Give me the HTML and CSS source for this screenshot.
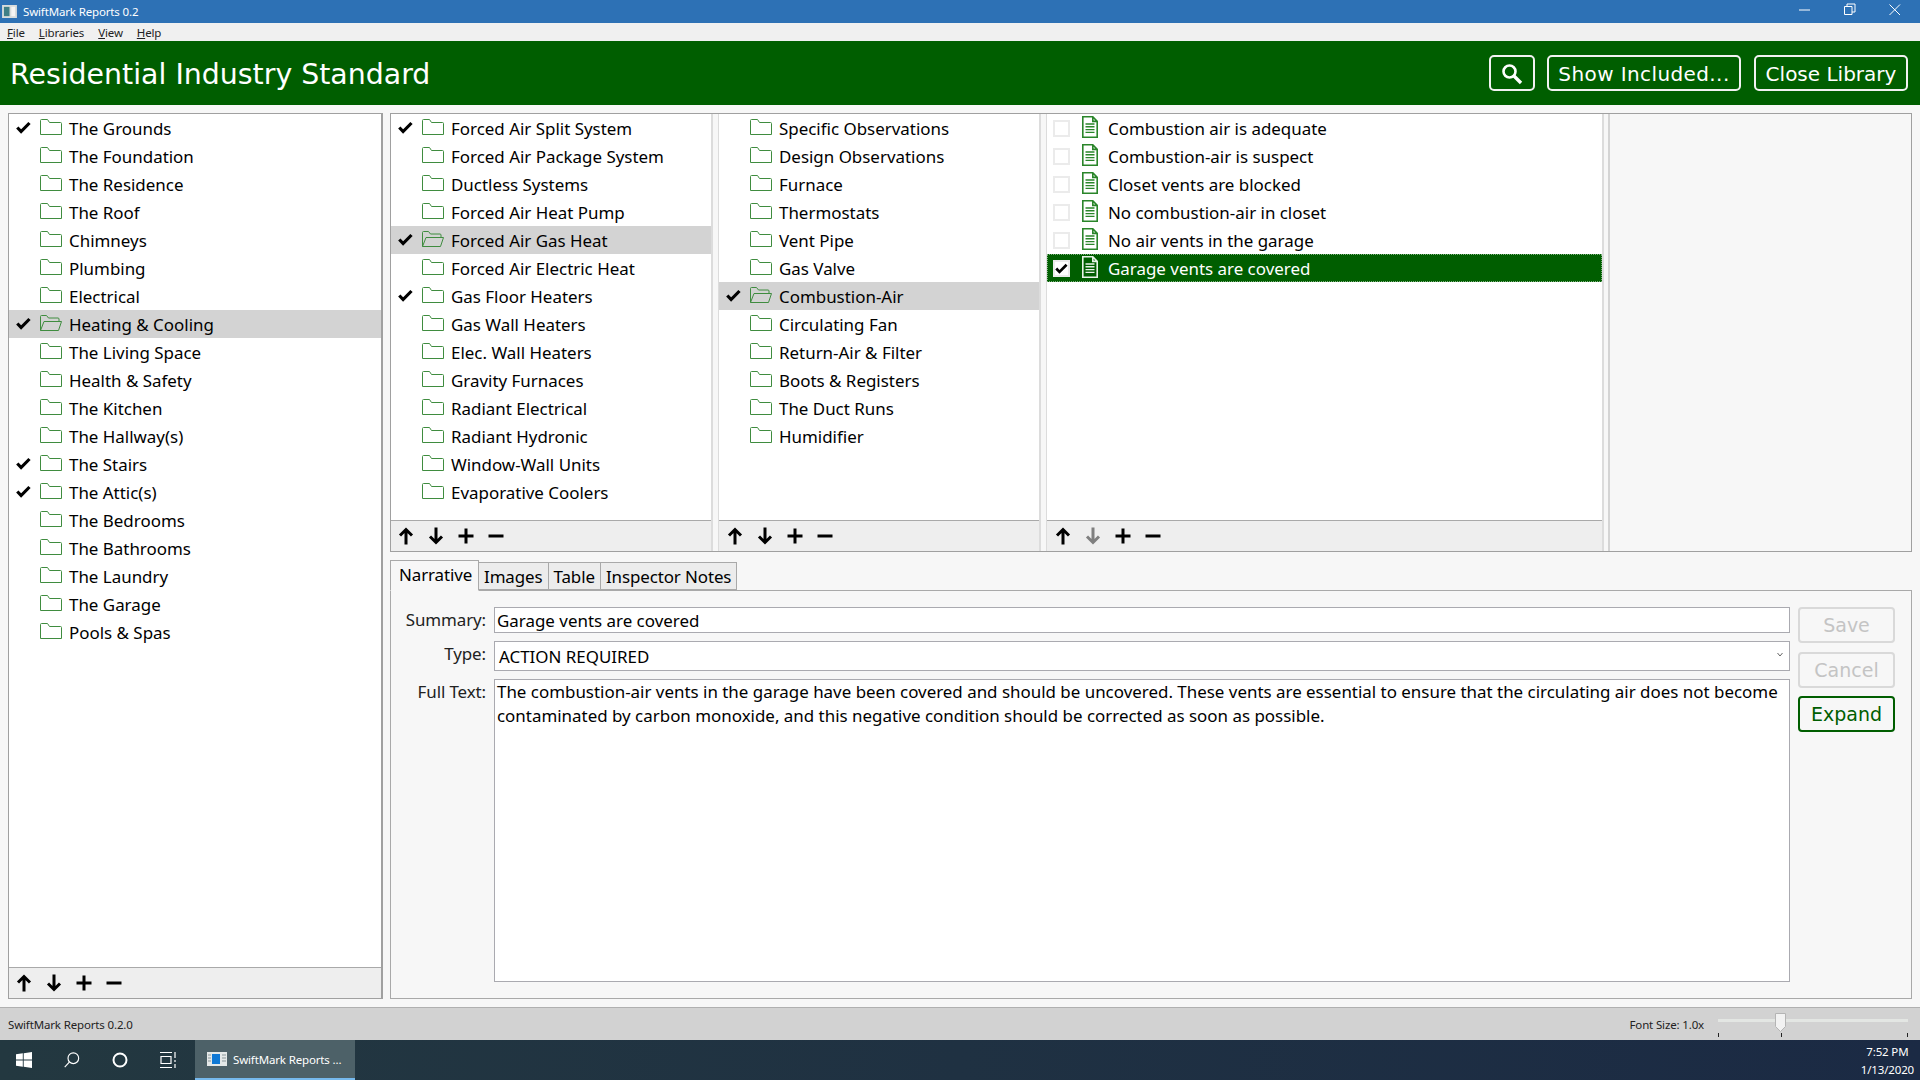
FILE: index.html

```html
<!DOCTYPE html>
<html lang="en">

<head>
    <meta charset="UTF-8" />
    <meta name="viewport" content="width=device-width, initial-scale=1.0" />
    <title>SwiftMark Reports 0.2</title>

    <link rel="stylesheet" href="styles.css">
</head>

<body>
    <svg class="defs" xmlns="http://www.w3.org/2000/svg">
        <symbol id="i-folder" viewBox="0 0 22 16"><path d="M.5 15.500V1.500q0-1 1-1h6l2 3h11q1 0 1 1v11z" fill="none" stroke="currentColor"/></symbol>
        <symbol id="i-open" viewBox="0 0 22 16"><path d="M.5 15.500V1.500q0-1 1-1h5l2 2.500h9.500q1 0 1 1v2M.5 15.500l3.500-9h17.500l-3 9z" fill="none" stroke="currentColor"/></symbol>
        <symbol id="i-doc" viewBox="0 0 16 22"><path d="M.8.8h10l4.400 4.600v15.800H.8zM10.800.8v4.600h4.400" fill="none" stroke="currentColor" stroke-width="1.600"/><path d="M3.500 8h9M3.500 10.800h9M3.500 13.600h9M3.500 16.400h9" stroke="currentColor" stroke-width="1.400"/></symbol>
        <symbol id="i-check" viewBox="0 0 15 13"><path d="M1.300 6.500l3.800 4L13.500 2" fill="none" stroke="currentColor" stroke-width="3.200"/></symbol>
        <symbol id="i-up" viewBox="0 0 16 18"><path d="M8 17.500V2.500M2 8.500l6-6 6 6" fill="none" stroke="currentColor" stroke-width="3"/></symbol>
        <symbol id="i-down" viewBox="0 0 16 18"><path d="M8 .5v15M2 9.500l6 6 6-6" fill="none" stroke="currentColor" stroke-width="3"/></symbol>
        <symbol id="i-plus" viewBox="0 0 16 18"><path d="M8 1.500v15M.5 9h15" fill="none" stroke="currentColor" stroke-width="3"/></symbol>
        <symbol id="i-minus" viewBox="0 0 16 18"><path d="M.5 9h15" fill="none" stroke="currentColor" stroke-width="3"/></symbol>
    </svg>

    <div class="window">
        <div class="titlebar">
            <svg class="app-icon" viewBox="0 0 16 14"><rect width="16" height="14" fill="#d8dcdc"/><rect x="2" y="2" width="6" height="10" fill="#3f7f86"/><rect x="10" y="2" width="4" height="10" fill="#f4f4f4"/></svg>
            <span class="title-text">SwiftMark Reports 0.2</span>
            <div class="win-controls">
                <svg viewBox="0 0 12 14"><path d="M0 7h11" stroke="#fff"/></svg>
                <svg viewBox="0 0 12 14"><path d="M.5 3.500h7.500v8H.5zM3 3.500V1h8v8H8" fill="none" stroke="#fff"/></svg>
                <svg viewBox="0 0 12 14"><path d="M.5 1.500l10.500 10.500M11 1.500L.5 12" stroke="#fff"/></svg>
            </div>
        </div>

        <nav class="menubar">
            <span><u>F</u>ile</span>
            <span><u>L</u>ibraries</span>
            <span><u>V</u>iew</span>
            <span><u>H</u>elp</span>
        </nav>

        <header class="banner">
            <h1>Residential Industry Standard</h1>
            <button class="banner-btn search-btn">
                <svg viewBox="0 0 22 22" width="22" height="22"><circle cx="8.500" cy="8.500" r="6" fill="none" stroke="#fff" stroke-width="2.600"/><path d="M13 13l7 7" stroke="#fff" stroke-width="3.400"/></svg>
            </button>
            <button class="banner-btn show-btn">Show Included...</button>
            <button class="banner-btn close-btn">Close Library</button>
        </header>

        <main class="content">
            <section class="panel left-panel">
                <ul class="list">
                    <li class="row"><svg class="check"><use href="#i-check"/></svg><svg class="folder"><use href="#i-folder"/></svg>The Grounds</li>
                    <li class="row"><span class="check"></span><svg class="folder"><use href="#i-folder"/></svg>The Foundation</li>
                    <li class="row"><span class="check"></span><svg class="folder"><use href="#i-folder"/></svg>The Residence</li>
                    <li class="row"><span class="check"></span><svg class="folder"><use href="#i-folder"/></svg>The Roof</li>
                    <li class="row"><span class="check"></span><svg class="folder"><use href="#i-folder"/></svg>Chimneys</li>
                    <li class="row"><span class="check"></span><svg class="folder"><use href="#i-folder"/></svg>Plumbing</li>
                    <li class="row"><span class="check"></span><svg class="folder"><use href="#i-folder"/></svg>Electrical</li>
                    <li class="row current"><svg class="check"><use href="#i-check"/></svg><svg class="folder"><use href="#i-open"/></svg>Heating &amp; Cooling</li>
                    <li class="row"><span class="check"></span><svg class="folder"><use href="#i-folder"/></svg>The Living Space</li>
                    <li class="row"><span class="check"></span><svg class="folder"><use href="#i-folder"/></svg>Health &amp; Safety</li>
                    <li class="row"><span class="check"></span><svg class="folder"><use href="#i-folder"/></svg>The Kitchen</li>
                    <li class="row"><span class="check"></span><svg class="folder"><use href="#i-folder"/></svg>The Hallway(s)</li>
                    <li class="row"><svg class="check"><use href="#i-check"/></svg><svg class="folder"><use href="#i-folder"/></svg>The Stairs</li>
                    <li class="row"><svg class="check"><use href="#i-check"/></svg><svg class="folder"><use href="#i-folder"/></svg>The Attic(s)</li>
                    <li class="row"><span class="check"></span><svg class="folder"><use href="#i-folder"/></svg>The Bedrooms</li>
                    <li class="row"><span class="check"></span><svg class="folder"><use href="#i-folder"/></svg>The Bathrooms</li>
                    <li class="row"><span class="check"></span><svg class="folder"><use href="#i-folder"/></svg>The Laundry</li>
                    <li class="row"><span class="check"></span><svg class="folder"><use href="#i-folder"/></svg>The Garage</li>
                    <li class="row"><span class="check"></span><svg class="folder"><use href="#i-folder"/></svg>Pools &amp; Spas</li>
                </ul>
                <div class="toolbar tight">
                    <svg class="tool"><use href="#i-up"/></svg>
                    <svg class="tool"><use href="#i-down"/></svg>
                    <svg class="tool"><use href="#i-plus"/></svg>
                    <svg class="tool"><use href="#i-minus"/></svg>
                </div>
            </section>

            <div class="right-side">
                <section class="panel columns">
                    <div class="col col-systems">
                        <ul class="list">
                            <li class="row"><svg class="check"><use href="#i-check"/></svg><svg class="folder"><use href="#i-folder"/></svg>Forced Air Split System</li>
                            <li class="row"><span class="check"></span><svg class="folder"><use href="#i-folder"/></svg>Forced Air Package System</li>
                            <li class="row"><span class="check"></span><svg class="folder"><use href="#i-folder"/></svg>Ductless Systems</li>
                            <li class="row"><span class="check"></span><svg class="folder"><use href="#i-folder"/></svg>Forced Air Heat Pump</li>
                            <li class="row current"><svg class="check"><use href="#i-check"/></svg><svg class="folder"><use href="#i-open"/></svg>Forced Air Gas Heat</li>
                            <li class="row"><span class="check"></span><svg class="folder"><use href="#i-folder"/></svg>Forced Air Electric Heat</li>
                            <li class="row"><svg class="check"><use href="#i-check"/></svg><svg class="folder"><use href="#i-folder"/></svg>Gas Floor Heaters</li>
                            <li class="row"><span class="check"></span><svg class="folder"><use href="#i-folder"/></svg>Gas Wall Heaters</li>
                            <li class="row"><span class="check"></span><svg class="folder"><use href="#i-folder"/></svg>Elec. Wall Heaters</li>
                            <li class="row"><span class="check"></span><svg class="folder"><use href="#i-folder"/></svg>Gravity Furnaces</li>
                            <li class="row"><span class="check"></span><svg class="folder"><use href="#i-folder"/></svg>Radiant Electrical</li>
                            <li class="row"><span class="check"></span><svg class="folder"><use href="#i-folder"/></svg>Radiant Hydronic</li>
                            <li class="row"><span class="check"></span><svg class="folder"><use href="#i-folder"/></svg>Window-Wall Units</li>
                            <li class="row"><span class="check"></span><svg class="folder"><use href="#i-folder"/></svg>Evaporative Coolers</li>
                        </ul>
                        <div class="toolbar tight">
                            <svg class="tool"><use href="#i-up"/></svg>
                            <svg class="tool"><use href="#i-down"/></svg>
                            <svg class="tool"><use href="#i-plus"/></svg>
                            <svg class="tool"><use href="#i-minus"/></svg>
                        </div>
                    </div>

                    <div class="col col-topics">
                        <ul class="list">
                            <li class="row"><span class="check"></span><svg class="folder"><use href="#i-folder"/></svg>Specific Observations</li>
                            <li class="row"><span class="check"></span><svg class="folder"><use href="#i-folder"/></svg>Design Observations</li>
                            <li class="row"><span class="check"></span><svg class="folder"><use href="#i-folder"/></svg>Furnace</li>
                            <li class="row"><span class="check"></span><svg class="folder"><use href="#i-folder"/></svg>Thermostats</li>
                            <li class="row"><span class="check"></span><svg class="folder"><use href="#i-folder"/></svg>Vent Pipe</li>
                            <li class="row"><span class="check"></span><svg class="folder"><use href="#i-folder"/></svg>Gas Valve</li>
                            <li class="row current"><svg class="check"><use href="#i-check"/></svg><svg class="folder"><use href="#i-open"/></svg>Combustion-Air</li>
                            <li class="row"><span class="check"></span><svg class="folder"><use href="#i-folder"/></svg>Circulating Fan</li>
                            <li class="row"><span class="check"></span><svg class="folder"><use href="#i-folder"/></svg>Return-Air &amp; Filter</li>
                            <li class="row"><span class="check"></span><svg class="folder"><use href="#i-folder"/></svg>Boots &amp; Registers</li>
                            <li class="row"><span class="check"></span><svg class="folder"><use href="#i-folder"/></svg>The Duct Runs</li>
                            <li class="row"><span class="check"></span><svg class="folder"><use href="#i-folder"/></svg>Humidifier</li>
                        </ul>
                        <div class="toolbar">
                            <svg class="tool"><use href="#i-up"/></svg>
                            <svg class="tool"><use href="#i-down"/></svg>
                            <svg class="tool"><use href="#i-plus"/></svg>
                            <svg class="tool"><use href="#i-minus"/></svg>
                        </div>
                    </div>

                    <div class="col col-items">
                        <ul class="list">
                            <li class="row item"><span class="box"></span><svg class="doc"><use href="#i-doc"/></svg>Combustion air is adequate</li>
                            <li class="row item"><span class="box"></span><svg class="doc"><use href="#i-doc"/></svg>Combustion-air is suspect</li>
                            <li class="row item"><span class="box"></span><svg class="doc"><use href="#i-doc"/></svg>Closet vents are blocked</li>
                            <li class="row item"><span class="box"></span><svg class="doc"><use href="#i-doc"/></svg>No combustion-air in closet</li>
                            <li class="row item"><span class="box"></span><svg class="doc"><use href="#i-doc"/></svg>No air vents in the garage</li>
                            <li class="row item selected"><span class="box"><svg class="box-check"><use href="#i-check"/></svg></span><svg class="doc"><use href="#i-doc"/></svg>Garage vents are covered</li>
                        </ul>
                        <div class="toolbar">
                            <svg class="tool"><use href="#i-up"/></svg>
                            <svg class="tool disabled"><use href="#i-down"/></svg>
                            <svg class="tool"><use href="#i-plus"/></svg>
                            <svg class="tool"><use href="#i-minus"/></svg>
                        </div>
                    </div>

                    <div class="col-empty"></div>
                </section>

                <div class="tabs">
                    <span class="tab active">Narrative</span>
                    <span class="tab">Images</span>
                    <span class="tab">Table</span>
                    <span class="tab">Inspector Notes</span>
                </div>

                <section class="tab-body">
                    <div class="fields">
                        <label class="field-label">Summary:</label>
                        <div class="input">Garage vents are covered</div>
                        <label class="field-label">Type:</label>
                        <div class="input select">ACTION REQUIRED
                            <svg class="caret" viewBox="0 0 6 5" width="6" height="5"><path d="M.5 1l2.500 3 2.500-3" fill="none" stroke="#666"/></svg>
                        </div>
                        <label class="field-label">Full Text:</label>
                        <div class="input textarea">The combustion-air vents in the garage have been covered and should be uncovered. These vents are essential to ensure that the circulating air does not become<br>contaminated by carbon monoxide, and this negative condition should be corrected as soon as possible.</div>
                    </div>
                    <div class="actions">
                        <button class="action-btn">Save</button>
                        <button class="action-btn">Cancel</button>
                        <button class="action-btn primary">Expand</button>
                    </div>
                </section>
            </div>
        </main>

        <footer class="statusbar">
            <span class="status-text">SwiftMark Reports 0.2.0</span>
            <span class="font-size-label">Font Size: 1.0x</span>
            <svg class="slider" viewBox="0 0 190 26" width="190" height="26">
                <rect x="0" y="6" width="190" height="3" fill="#e3e6e3"/>
                <path d="M57.500.5h10v13l-5 5-5-5z" fill="#f2f2f2" stroke="#b4b4b4"/>
                <path d="M.5 20v4M63.500 20v4M189.500 20v4" stroke="#222"/>
            </svg>
        </footer>

        <div class="taskbar">
            <svg class="task-icon win-logo" viewBox="0 0 16 16"><path d="M0 2.300l6.800-1v6.300H0zM7.700 1.200L16 0v7.600H7.700zM0 8.400h6.800v6.300l-6.800-1zM7.700 8.400H16V16l-8.300-1.200z" fill="#fff"/></svg>
            <svg class="task-icon" viewBox="0 0 18 18"><circle cx="10.500" cy="7" r="6" fill="none" stroke="#fff" stroke-width="1.300"/><path d="M6 11.500L.8 17" stroke="#fff" stroke-width="1.300"/></svg>
            <svg class="task-icon" viewBox="0 0 16 16"><circle cx="8" cy="8" r="6.500" fill="none" stroke="#fff" stroke-width="2"/></svg>
            <svg class="task-icon" viewBox="0 0 16 16"><path d="M0 .5h12M1 4.500h10v7H1zM0 15.500h12M15 0v6M15 8v2M15 12v4" fill="none" stroke="#fff" stroke-width="1.200"/></svg>
            <div class="task-app">
                <svg viewBox="0 0 20 14" width="20" height="14"><rect width="20" height="14" fill="#e4e8e8"/><rect x="5" y="2" width="8" height="10" fill="#0f78d4"/><path d="M1 3h3M1 6h3M1 9h3M15 3h4M15 6h4M15 9h4" stroke="#8a9699"/></svg>
                <span>SwiftMark Reports ...</span>
            </div>
            <div class="clock">
                <span>7:52 PM</span>
                <span>1/13/2020</span>
            </div>
        </div>
    </div>
</body>

</html>
```

FILE: styles.css

```css
* {
    box-sizing: border-box;
}

body {
    margin: 0;
    font-family: "Noto Sans", "Open Sans", sans-serif;
    color: #000;
    overflow: hidden;
}

.defs {
    display: none;
}

.window {
    width: 1920px;
    height: 1080px;
    display: flex;
    flex-direction: column;
    background: #f7f7f7;
}

/* title + menu */
.titlebar {
    height: 23px;
    background: #2d71b5;
    color: #fff;
    display: flex;
    align-items: center;
    padding-left: 2px;
    font-size: 11.5px;
    letter-spacing: -0.15px;
}

.app-icon {
    width: 15px;
    height: 13px;
    margin-right: 6px;
}

.win-controls {
    margin-left: auto;
    display: flex;
    gap: 33px;
    margin-right: 19px;
}

.win-controls svg {
    width: 12px;
    height: 14px;
    margin-bottom: 3px;
}

.menubar {
    height: 18px;
    background: #f0f0f0;
    display: flex;
    gap: 14px;
    padding-left: 7px;
    font-size: 11.5px;
    letter-spacing: -0.15px;
    line-height: 19px;
    color: #222;
}

.banner {
    height: 64px;
    background: #005e00;
    color: #fff;
    display: flex;
    align-items: center;
    gap: 12px;
    padding: 0 12px 0 10px;
}

.banner h1 {
    margin: 2px auto 0 0;
    font-family: "DejaVu Sans", sans-serif;
    font-weight: normal;
    font-size: 28.4px;
}

.banner-btn {
    height: 36px;
    padding: 1px 0 0;
    background: transparent;
    color: #fff;
    border: 2px solid #f2f2f2;
    border-radius: 5px;
    font-family: "DejaVu Sans", sans-serif;
    font-size: 20px;
}

.search-btn {
    width: 46px;
    display: flex;
    align-items: center;
    justify-content: center;
}

.show-btn {
    width: 194px;
    letter-spacing: 0.4px;
}

.close-btn {
    width: 154px;
    margin-left: 1px;
}

/* main area */
.content {
    flex: 1;
    display: flex;
    gap: 7px;
    padding: 8px;
    min-height: 0;
}

.panel {
    border: 1px solid #a0a0a0;
    background: #fff;
}

.left-panel {
    width: 375px;
    display: flex;
    flex-direction: column;
    border-right-width: 2px;
}

.list {
    list-style: none;
    margin: 0;
    padding: 0;
    flex: 1;
    background: #fff;
}

.row {
    height: 28px;
    display: flex;
    align-items: center;
    font-size: 16.93px;
    white-space: nowrap;
}

.row.current {
    background: #d3d3d3;
}

.check {
    width: 15px;
    height: 13px;
    margin-left: 7px;
    margin-right: 9px;
    flex: none;
    color: #000;
    margin-bottom: 2px;
}

.folder {
    width: 22px;
    height: 16px;
    margin-right: 7px;
    margin-bottom: 2px;
    flex: none;
    color: #3f8c3f;
}

.row.item {
    padding-left: 6px;
}

.box {
    width: 17px;
    height: 17px;
    border: 2px solid #ebebeb;
    background: #fff;
    margin-right: 12px;
    flex: none;
    display: flex;
    align-items: center;
    justify-content: center;
}

.box-check {
    width: 13px;
    height: 11px;
    color: #000;
}

.doc {
    width: 16px;
    height: 22px;
    margin-right: 10px;
    margin-bottom: 2px;
    flex: none;
    color: #2a852a;
}

.row.selected {
    background: #005e00;
    color: #fff;
    outline: 1px dotted #7fae7f;
    outline-offset: -1px;
}

.row.selected .doc {
    color: #e8f2e8;
}

.toolbar {
    height: 31px;
    flex: none;
    background: #eee;
    border-top: 1px solid #a9a9a9;
    display: flex;
    align-items: center;
    gap: 14px;
    padding-left: 8px;
}

.toolbar.tight {
    padding-left: 7px;
}

.tool {
    width: 16px;
    height: 18px;
    color: #000;
}

.tool.disabled {
    color: #7f7f7f;
}

.right-side {
    flex: 1;
    min-width: 0;
    display: flex;
    flex-direction: column;
}

.columns {
    height: 439px;
    flex: none;
    display: flex;
    gap: 4px;
    background: #f7f7f7;
}

.col {
    display: flex;
    flex-direction: column;
    border-right: 2px solid #dcdcdc;
    border-left: 1px solid #dcdcdc;
    margin-right: 1px;
}

.col-systems {
    width: 322px;
    border-left: none;
}

.col-topics {
    width: 323px;
}

.col-items {
    width: 558px;
    margin-right: 0;
}

.col-empty {
    flex: 1;
    border-left: 2px solid #d4d4d4;
}

/* tabs */
.tabs {
    margin-top: 8px;
    height: 30px;
    flex: none;
    display: flex;
    align-items: flex-end;
    font-size: 16.93px;
    letter-spacing: -0.1px;
}

.tab {
    height: 28px;
    padding: 0 5px;
    line-height: 27px;
    background: #ececec;
    border: 1px solid #a9a9a9;
    border-left: none;
}

.tab.active {
    height: 31px;
    width: 89px;
    padding: 0 8px;
    margin-bottom: -1px;
    line-height: 27px;
    background: #f7f7f7;
    border: 1px solid #a9a9a9;
    border-bottom-color: #f7f7f7;
    position: relative;
}

.tab-body {
    flex: 1;
    min-height: 0;
    display: flex;
    border: 1px solid #a9a9a9;
    padding: 16px 16px 16px 0;
}

.fields {
    flex: 1;
    min-width: 0;
    display: grid;
    grid-template-columns: 95px 1fr;
    grid-template-rows: 26px 30px 1fr;
    gap: 8px;
    font-size: 16.93px;
}

.field-label {
    text-align: right;
    color: #222;
    line-height: 26px;
    white-space: nowrap;
    letter-spacing: -0.1px;
}

.input {
    background: #fff;
    border: 1px solid #aaaab0;
    padding-left: 2px;
    line-height: 25px;
    white-space: nowrap;
}

.select {
    display: flex;
    align-items: center;
    justify-content: space-between;
    padding-left: 4px;
    padding-right: 6px;
}

.caret {
    margin-bottom: 4px;
}

.textarea {
    line-height: 24px;
}

.actions {
    width: 97px;
    margin-left: 8px;
    flex: none;
    display: flex;
    flex-direction: column;
    gap: 8.5px;
}

.action-btn {
    height: 36px;
    padding: 0;
    background: transparent;
    border: 2px solid #d9d9d9;
    border-radius: 4px;
    color: #c4c4c4;
    font-family: "DejaVu Sans", sans-serif;
    font-size: 19px;
}

.action-btn.primary {
    border-color: #005e00;
    color: #005e00;
}

/* status + taskbar */
.statusbar {
    height: 33px;
    flex: none;
    background: #d2d2d2;
    border-top: 1px solid #b0b0b0;
    display: flex;
    align-items: center;
    padding: 0 12px 0 8px;
    font-size: 11.5px;
    letter-spacing: -0.15px;
    color: #222;
}

.font-size-label {
    margin-left: auto;
    margin-right: 14px;
}

.slider {
    margin-top: 4px;
}

.taskbar {
    height: 40px;
    flex: none;
    background: linear-gradient(90deg, #233840, #1b2a44);
    color: #fff;
    display: flex;
    align-items: center;
    padding-left: 16px;
    font-size: 11.5px;
    letter-spacing: -0.15px;
}

.task-icon {
    width: 16px;
    height: 16px;
    margin-right: 32px;
}

.task-app {
    width: 160px;
    height: 40px;
    margin-left: -13px;
    display: flex;
    align-items: center;
    gap: 6px;
    padding-left: 12px;
    background: #4d6168;
    border-bottom: 2px solid #76b9ed;
}

.clock {
    margin-left: auto;
    padding: 2px 6px 0 0;
    display: flex;
    flex-direction: column;
    align-items: center;
    line-height: 18px;
}
```
